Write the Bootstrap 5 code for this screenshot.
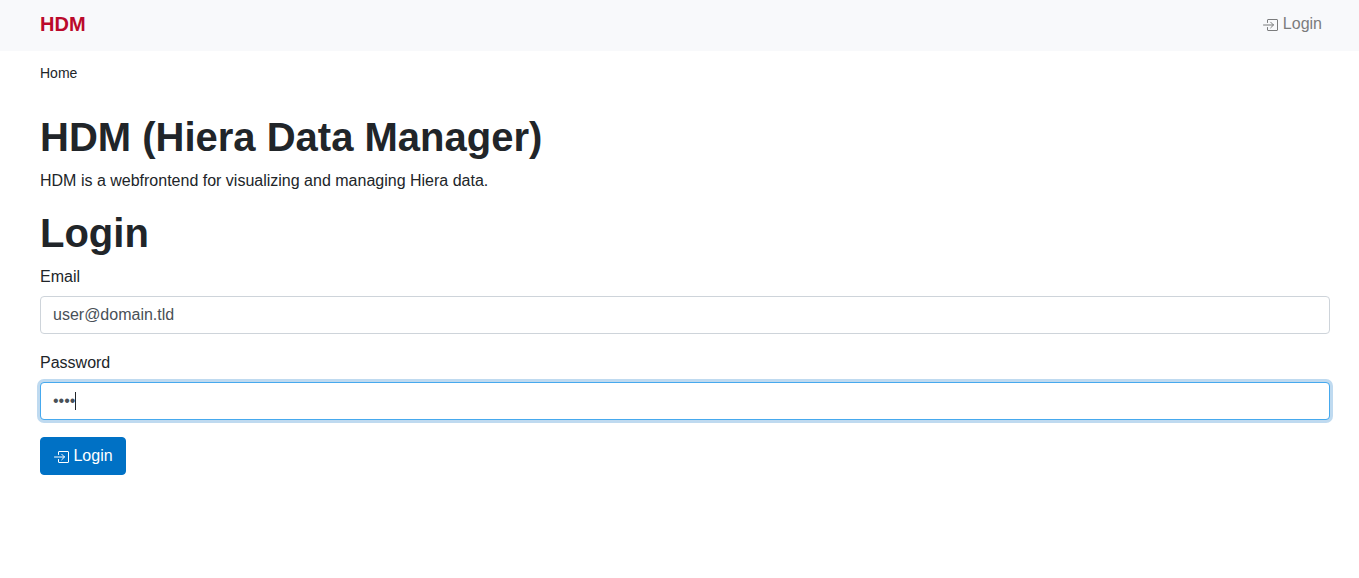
<!DOCTYPE html>
<html lang="en">
<head>
<meta charset="utf-8">
<meta name="viewport" content="width=device-width, initial-scale=1">
<title>HDM</title>
<link href="https://cdn.jsdelivr.net/npm/bootstrap@5.3.0/dist/css/bootstrap.min.css" rel="stylesheet">
<style>
body { font-family: "Liberation Sans", Arial, sans-serif; color: #212529; }
.page-pad { padding-left: 40px; padding-right: 29px; }
.topbar { background: #f8f9fb; padding-top: 8px; padding-bottom: 11px; }
.topbar .navbar-brand { color: #bb0a2b; font-weight: 700; padding: 0; line-height: 32px; }
.topbar .nav-link { color: #7b7c7d; padding: 0 8px; }
.crumbs { font-size: 14px; line-height: 20px; margin: 12px 0 30px; }
.crumbs a { color: #212529; text-decoration: none; }
h1, h2 { font-size: 40px; line-height: 48px; font-weight: 700; margin-bottom: 8px; }
.form-label { display: block; line-height: 24px; margin-bottom: 7px; }
.field { margin-bottom: 17px; }
.form-control { border-color: #ced4da; border-radius: 4px; color: #495057; }
.form-control:focus { border-color: #46a9ee; box-shadow: 0 0 0 3px #bfdaf0; color: #495057; caret-color: transparent; }
.caret-line { position: absolute; left: 35px; top: 10px; width: 1px; height: 18px; background: #212529; }
.btn-login { --bs-btn-bg: #0071c5; --bs-btn-color: #fff; --bs-btn-border-color: #0071c5; --bs-btn-hover-bg: #005fa6; --bs-btn-hover-color: #fff; border-radius: 4px; }
.icon-login { width: 16px; height: 16px; vertical-align: -4px; fill: none; stroke: currentColor; stroke-linecap: round; stroke-linejoin: round; }
</style>
</head>
<body>
<svg class="d-none" aria-hidden="true">
  <symbol id="login-icon" viewBox="0 0 16 16"><path d="M5.500 5.500V3q0-.5.5-.5h9q.5 0 .5.500v10q0 .5-.5.5H6q-.5 0-.5-.5v-2.500M1.500 8h10M8.700 5.200 11.500 8 8.700 10.800"/></symbol>
</svg>
<nav class="navbar topbar page-pad">
  <a class="navbar-brand" href="#">HDM</a>
  <a class="nav-link" href="#"><svg class="icon-login" aria-hidden="true"><use href="#login-icon"/></svg> Login</a>
</nav>
<main class="page-pad">
  <nav class="crumbs" aria-label="breadcrumb"><a href="#">Home</a></nav>
  <h1>HDM (Hiera Data Manager)</h1>
  <p>HDM is a webfrontend for visualizing and managing Hiera data.</p>
  <h2>Login</h2>
  <form>
    <div class="field">
      <label class="form-label" for="email">Email</label>
      <input class="form-control" type="email" id="email" value="user@domain.tld">
    </div>
    <div class="field">
      <label class="form-label" for="password">Password</label>
      <div class="position-relative">
        <input class="form-control" type="password" id="password" value="pass" autofocus>
        <span class="caret-line" aria-hidden="true"></span>
      </div>
    </div>
    <button class="btn btn-login" type="submit"><svg class="icon-login" aria-hidden="true"><use href="#login-icon"/></svg> Login</button>
  </form>
</main>
<script src="https://cdn.jsdelivr.net/npm/bootstrap@5.3.0/dist/js/bootstrap.bundle.min.js"></script>
</body>
</html>
